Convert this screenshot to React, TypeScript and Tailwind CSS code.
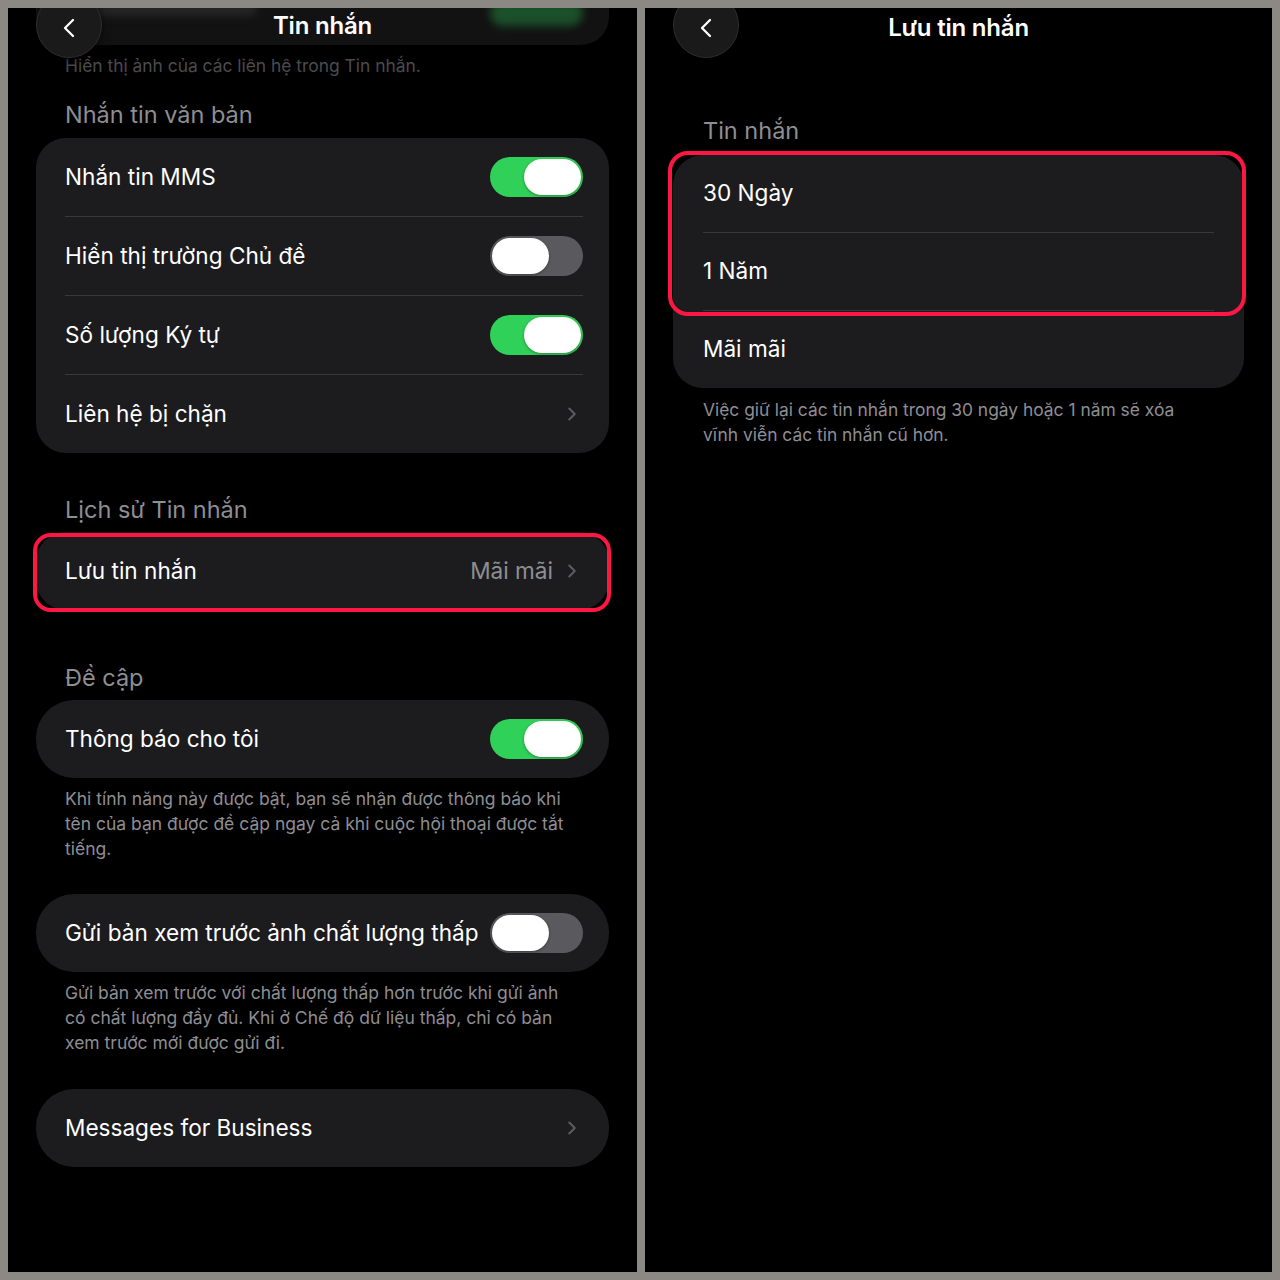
import { ChevronLeft, ChevronRight } from "lucide-react";

const font = { fontFamily: "Inter, 'Noto Sans', sans-serif" };

function Toggle({ on }: { on: boolean }) {
  return (
    <div
      className={`flex h-[40px] w-[93px] shrink-0 items-center rounded-full p-[2px] ${
        on ? "justify-end bg-[#30d158]" : "justify-start bg-[#5a5a5e]"
      }`}
    >
      <div className="h-[36px] w-[57px] rounded-full bg-white shadow-[0_1px_3px_rgba(0,0,0,0.35)]" />
    </div>
  );
}

function Chevron() {
  return <ChevronRight size={22} strokeWidth={2.2} className="shrink-0 text-[#5c5c61]" />;
}

function Row({ label, right }: { label: string; right?: React.ReactNode }) {
  return (
    <div className="flex h-[78px] items-center justify-between pr-[26px]">
      <span className="text-[22.6px] text-white">{label}</span>
      {right}
    </div>
  );
}

function Divider() {
  return <div className="mr-[26px] h-px bg-[#38383a]" />;
}

function SectionHeader({ children }: { children: React.ReactNode }) {
  return (
    <div className="px-[57px] text-[23.5px] leading-[28px] text-[#8e8e93]">{children}</div>
  );
}

function BackButton() {
  return (
    <div className="absolute left-[28px] top-[-16px] flex h-[66px] w-[66px] items-center justify-center rounded-full border border-[#2e2e30] bg-[#1a1a1a] shadow-[0_2px_10px_rgba(0,0,0,0.6)]">
      <ChevronLeft size={32} strokeWidth={1.7} className="mt-[6px] text-white" />
    </div>
  );
}

function Footer({ lines }: { lines: string[] }) {
  return (
    <div className="px-[57px] text-[17.5px] leading-[25px] text-[#8e8e93]">
      {lines.map((l) => (
        <div key={l}>{l}</div>
      ))}
    </div>
  );
}

function PillCard({ label, right }: { label: string; right: React.ReactNode }) {
  return (
    <div className="mx-[28px] flex h-[78px] items-center justify-between rounded-[38px] bg-[#1c1c1e] pl-[29px] pr-[26px]">
      <span className="text-[22.6px] text-white">{label}</span>
      {right}
    </div>
  );
}

function LeftPanel() {
  return (
    <div className="relative h-[1264px] w-[629px] overflow-hidden bg-black" style={font}>
      {/* blurred content scrolled under the header */}
      <div className="relative mx-[28px] h-[37px] overflow-hidden rounded-b-[28px] bg-[#121212]">
        <div className="absolute left-[60px] top-[-8px] h-[16px] w-[160px] rounded bg-[#3a3a3a] opacity-50 blur-[4px]" />
        <div className="absolute right-[26px] top-[-8px] h-[26px] w-[93px] rounded-full bg-[#1f6b35] opacity-70 blur-[4px]" />
      </div>
      <div className="mt-[10px] px-[57px] text-[17.4px] leading-[22px] text-[#4b4b4e]">
        Hiển thị ảnh của các liên hệ trong Tin nhắn.
      </div>

      <div className="absolute left-0 right-0 top-0 flex h-[36px] items-center justify-center">
        <span className="text-[24px] font-semibold tracking-[-0.2px] text-white">Tin nhắn</span>
      </div>
      <BackButton />

      <div className="mt-[24px]">
        <SectionHeader>Nhắn tin văn bản</SectionHeader>
      </div>
      <div className="mx-[28px] mt-[9px] rounded-[30px] bg-[#1c1c1e] pl-[29px]">
        <Row label="Nhắn tin MMS" right={<Toggle on />} />
        <Divider />
        <Row label="Hiển thị trường Chủ đề" right={<Toggle on={false} />} />
        <Divider />
        <Row label="Số lượng Ký tự" right={<Toggle on />} />
        <Divider />
        <Row label="Liên hệ bị chặn" right={<Chevron />} />
      </div>

      <div className="mt-[43px]">
        <SectionHeader>Lịch sử Tin nhắn</SectionHeader>
      </div>
      <div className="relative mx-[28px] mt-[8px]">
        <div className="flex h-[78px] items-center justify-between rounded-[30px] bg-[#1c1c1e] pl-[29px] pr-[26px]">
          <span className="text-[22.6px] text-white">Lưu tin nhắn</span>
          <div className="flex items-center gap-[8px]">
            <span className="text-[22.6px] text-[#8e8e93]">Mãi mãi</span>
            <Chevron />
          </div>
        </div>
        <div className="pointer-events-none absolute bottom-[-2px] left-[-3px] right-[-2px] top-[1px] rounded-[18px] border-[4px] border-[#ff1744]" />
      </div>

      <div className="mt-[54px]">
        <SectionHeader>Đề cập</SectionHeader>
      </div>
      <div className="mt-[8px]">
        <PillCard label="Thông báo cho tôi" right={<Toggle on />} />
      </div>
      <div className="mt-[8px]">
        <Footer
          lines={[
            "Khi tính năng này được bật, bạn sẽ nhận được thông báo khi",
            "tên của bạn được đề cập ngay cả khi cuộc hội thoại được tắt",
            "tiếng.",
          ]}
        />
      </div>

      <div className="mt-[33px]">
        <PillCard label="Gửi bản xem trước ảnh chất lượng thấp" right={<Toggle on={false} />} />
      </div>
      <div className="mt-[8px]">
        <Footer
          lines={[
            "Gửi bản xem trước với chất lượng thấp hơn trước khi gửi ảnh",
            "có chất lượng đầy đủ. Khi ở Chế độ dữ liệu thấp, chỉ có bản",
            "xem trước mới được gửi đi.",
          ]}
        />
      </div>

      <div className="mt-[34px]">
        <PillCard label="Messages for Business" right={<Chevron />} />
      </div>
    </div>
  );
}

function RightPanel() {
  return (
    <div className="relative h-[1264px] w-[627px] overflow-hidden bg-black" style={font}>
      <div className="flex h-[40px] items-center justify-center">
        <span className="text-[24px] font-semibold tracking-[-0.2px] text-white">Lưu tin nhắn</span>
      </div>
      <BackButton />

      <div className="mt-[69px] px-[58px] text-[23.5px] leading-[28px] text-[#8e8e93]">
        Tin nhắn
      </div>
      <div className="relative mx-[28px] mt-[10px]">
        <div className="rounded-[30px] bg-[#1c1c1e] pl-[30px]">
          <div className="flex h-[77px] items-center pb-[2px]">
            <span className="text-[22.6px] text-white">30 Ngày</span>
          </div>
          <div className="mr-[30px] h-px bg-[#38383a]" />
          <div className="flex h-[77px] items-center pb-[2px]">
            <span className="text-[22.6px] text-white">1 Năm</span>
          </div>
          <div className="mr-[30px] h-px bg-[#38383a]" />
          <div className="flex h-[77px] items-center pb-[2px]">
            <span className="text-[22.6px] text-white">Mãi mãi</span>
          </div>
        </div>
        <div className="pointer-events-none absolute left-[-5px] right-[-2px] top-[-4px] h-[165px] rounded-[20px] border-[4px] border-[#ff1744]" />
      </div>
      <div className="mt-[9px] px-[58px] text-[17.4px] leading-[25px] text-[#8e8e93]">
        <div>Việc giữ lại các tin nhắn trong 30 ngày hoặc 1 năm sẽ xóa</div>
        <div>vĩnh viễn các tin nhắn cũ hơn.</div>
      </div>
    </div>
  );
}

export default function App() {
  return (
    <div className="flex h-[1280px] w-[1280px] gap-[8px] bg-[#8c8884] p-[8px]">
      <LeftPanel />
      <RightPanel />
    </div>
  );
}
